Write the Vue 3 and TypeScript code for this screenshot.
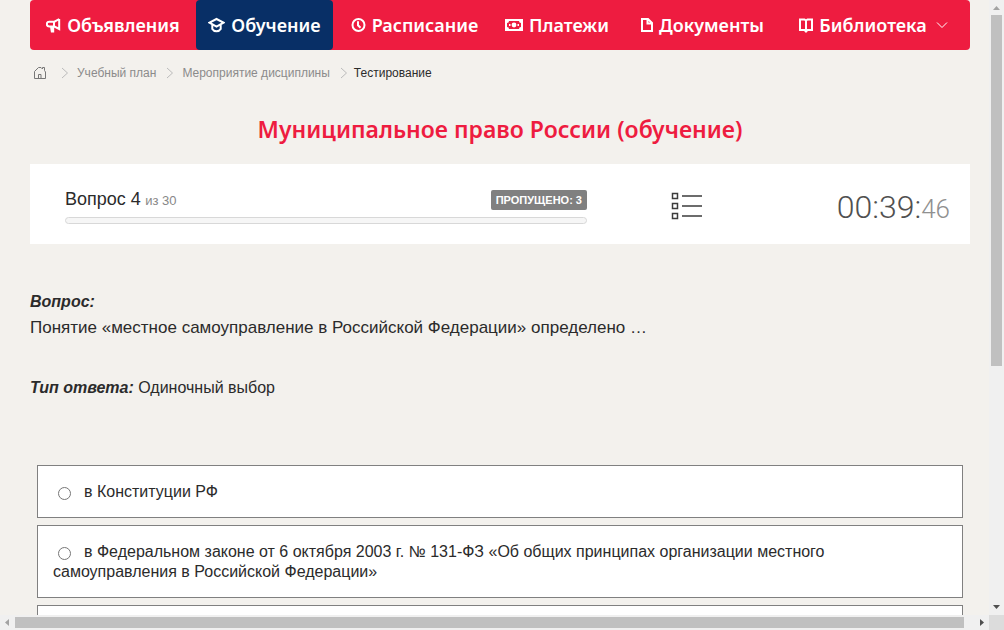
<script setup lang="ts">
import { ref } from 'vue'

interface NavItem {
  label: string
  icon: string
  active?: boolean
  menu?: boolean
}

const navItems: NavItem[] = [
  { label: 'Объявления', icon: 'horn' },
  { label: 'Обучение', icon: 'cap', active: true },
  { label: 'Расписание', icon: 'clock' },
  { label: 'Платежи', icon: 'money' },
  { label: 'Документы', icon: 'file' },
  { label: 'Библиотека', icon: 'book', menu: true },
]

const crumbs: string[] = ['Учебный план', 'Мероприятие дисциплины']

const answers: string[] = [
  'в Конституции РФ',
  'в Федеральном законе от 6 октября 2003 г. № 131-ФЗ «Об общих принципах организации местного самоуправления в Российской Федерации»',
]

const selected = ref<number | null>(null)
</script>

<template>
  <div class="shell">
    <div class="viewport">
      <div class="content">
        <nav class="nav">
          <a v-for="item in navItems" :key="item.label" href="#" class="nav-item" :class="{ active: item.active }">
            <svg v-if="item.icon === 'horn'" width="15" height="16" viewBox="0 0 15 16" class="line">
              <path d="M13.2 2v10L8.5 9.5H3.2a2.4 2.4 0 0 1 0-4.800h5.300L13.200 2M8 5v4.500M5 9.500l.8 5h1.400V10" />
            </svg>
            <svg v-else-if="item.icon === 'cap'" width="17" height="16" viewBox="0 0 17 16" class="line cap">
              <path d="M1.500 5.700 8.500 2l7 3.700-7 3.900zM4.300 7.500v4.500c1 1.700 2.500 2.300 4.200 2.300s3.200-.6 4.200-2.300V7.500" />
            </svg>
            <svg v-else-if="item.icon === 'clock'" width="15" height="16" viewBox="0 0 15 16" class="line">
              <circle cx="7.5" cy="8" r="6" />
              <path d="M7 4.300v4l2.500 2.500" />
            </svg>
            <svg v-else-if="item.icon === 'money'" width="18" height="12" viewBox="0 0 18 12">
              <path fill="#fff" fill-rule="evenodd" d="M0 0h18v12H0zM4 2a2 2 0 0 1-2 2v4a2 2 0 0 1 2 2h10a2 2 0 0 1 2-2V4a2 2 0 0 1-2-2z" />
              <circle cx="9" cy="6" r="2.4" fill="#fff" />
              <path fill="#fff" d="M4 5h1.500v2H4zM12.500 5H14v2h-1.500z" />
            </svg>
            <svg v-else-if="item.icon === 'file'" width="12" height="14" viewBox="0 0 12 14" class="line">
              <path d="M1 1h6l4 4v8H1zM6.500 1v4.500H11" />
            </svg>
            <svg v-else width="14" height="15" viewBox="0 0 14 15" class="line">
              <path d="M1 1.500h4.500L7 2.500l1.500-1H13v10.500H8.500L7 13.500 5.500 12H1zM7 2.500v11" />
            </svg>
            <span>{{ item.label }}</span>
            <svg v-if="item.menu" class="chevron" width="12" height="8" viewBox="0 0 12 8">
              <path d="m1 1.500 5 5 5-5" />
            </svg>
          </a>
        </nav>

        <nav class="crumbs" aria-label="Навигация">
          <a href="#" class="home" aria-label="Главная">
            <svg width="14" height="14" viewBox="0 0 14 14">
              <path d="M1.500 5.500 5.500 1.500h2.500l1.500 1.500V1.500h2v3l1 1.500v6.500h-11zM5.500 12.500v-4h2.500v4" />
            </svg>
          </a>
          <template v-for="crumb in crumbs" :key="crumb">
            <svg class="sep" width="8" height="12" viewBox="0 0 8 12"><path d="m1 1 5.500 5L1 11" /></svg>
            <a href="#">{{ crumb }}</a>
          </template>
          <svg class="sep" width="8" height="12" viewBox="0 0 8 12"><path d="m1 1 5.500 5L1 11" /></svg>
          <span class="current">Тестирование</span>
        </nav>

        <h1>Муниципальное право России (обучение)</h1>

        <section class="status">
          <div class="progress">
            <div class="progress-head">
              <div><span class="number">Вопрос 4</span> <span class="total">из 30</span></div>
              <span class="badge">ПРОПУЩЕНО: 3</span>
            </div>
            <div class="bar"></div>
          </div>
          <button type="button" class="list" aria-label="Список вопросов">
            <svg width="32" height="30" viewBox="0 0 32 30">
              <path d="M1.500 2.500h5v5h-5zM1.500 12.500h5v5h-5zM1.500 22.500h5v5h-5z" />
              <path d="M11 5h20M11 15h20M11 25h20" />
            </svg>
          </button>
          <div class="timer">00:39:<span>46</span></div>
        </section>

        <section class="question">
          <strong>Вопрос:</strong>
          <p class="text">Понятие «местное самоуправление в Российской Федерации» определено …</p>
          <p class="kind"><strong>Тип ответа:</strong> Одиночный выбор</p>
        </section>

        <div class="answers" role="radiogroup">
          <label v-for="(answer, i) in answers" :key="i" class="answer">
            <input v-model="selected" type="radio" name="answer" :value="i" />{{ answer }}
          </label>
          <div class="answer"></div>
        </div>
      </div>
    </div>

    <div class="track vertical">
      <svg width="15" height="15" viewBox="0 0 15 15"><path fill="#a3a3a3" d="M4 10h7L7.500 6z" /></svg>
      <div class="rail"><div class="thumb"></div></div>
      <svg width="15" height="15" viewBox="0 0 15 15"><path fill="#505050" d="M4 5h7L7.500 9z" /></svg>
    </div>
    <div class="track horizontal">
      <svg width="15" height="15" viewBox="0 0 15 15"><path fill="#a3a3a3" d="M9 4v7L5 7.500z" /></svg>
      <div class="rail"><div class="thumb"></div></div>
      <svg width="15" height="15" viewBox="0 0 15 15"><path fill="#505050" d="M6 4v7l4-3.500z" /></svg>
    </div>
    <div class="corner"></div>
  </div>
</template>

<style>
body {
  background: #f3f1ed;
}
</style>

<style scoped>
* {
  box-sizing: border-box;
}
.shell {
  display: grid;
  grid-template: minmax(0, 1fr) 15px / minmax(0, 1fr) 15px;
  height: 100vh;
  color: #2b2b2b;
  font: 16px/20px "Liberation Sans", Arial, sans-serif;
}
.viewport {
  overflow: hidden;
}
.content {
  padding: 0 19px 0 30px;
}
a {
  color: inherit;
  text-decoration: none;
}
.nav {
  display: grid;
  grid-template-columns: 166fr 137fr 163fr 122fr 169fr 183fr;
  height: 50px;
  border-radius: 4px;
  background: #ee1c40;
}
.nav-item {
  display: flex;
  align-items: center;
  justify-content: center;
  gap: 6px;
  border-radius: 4px;
  color: #fff;
  font: 600 18px/24px "Noto Sans", sans-serif;
  white-space: nowrap;
}
.nav-item svg {
  flex: none;
}
.nav-item:last-child {
  padding-right: 10px;
}
.nav-item.active {
  background: #082f66;
}
.line {
  fill: none;
  stroke: #fff;
  stroke-width: 2;
}
.chevron {
  margin-left: 3px;
  fill: none;
  stroke: #fff;
}
.crumbs {
  display: flex;
  align-items: center;
  gap: 8px;
  height: 45px;
  padding-left: 3px;
  color: #8b8b8b;
  font-size: 12px;
}
.crumbs svg {
  display: block;
  fill: none;
  stroke: #777;
}
.home {
  margin-right: 4px;
}
.crumbs .sep {
  margin-left: 2px;
  stroke: #bbb;
}
.crumbs .sep:last-of-type {
  margin-right: -2px;
}
.current {
  color: #2b2b2b;
}
h1 {
  margin: 19px 0;
  color: #ee1c40;
  font: 600 23px/31px "Noto Sans", sans-serif;
  text-align: center;
}
.status {
  display: grid;
  grid-template-columns: 522fr 200fr 163fr;
  align-items: center;
  height: 80px;
  padding: 4px 20px 0 35px;
  background: #fff;
}
.progress-head {
  display: flex;
  align-items: center;
  justify-content: space-between;
  margin-bottom: 6px;
}
.number {
  font-size: 18px;
}
.total {
  color: #888;
  font-size: 13px;
}
.badge {
  padding: 0 5px;
  border-radius: 2px;
  background: #808080;
  color: #fff;
  font-size: 11px;
  font-weight: 700;
}
.bar {
  height: 7px;
  border: 1px solid #d8d8d8;
  border-radius: 4px;
  background: #f6f6f6;
}
.list {
  justify-self: center;
  padding: 0;
  border: 0;
  background: none;
}
.list svg {
  display: block;
  fill: none;
  stroke: #3c3c3c;
  stroke-width: 1.5;
}
.timer {
  justify-self: end;
  padding-top: 4px;
  color: #505050;
  font: 300 32px/40px Roboto, sans-serif;
  white-space: nowrap;
}
.timer span {
  color: #909090;
  font-size: 26px;
}
.question {
  padding-top: 48px;
}
.question strong {
  font-style: italic;
}
.text {
  margin: 6px 0 40px;
  font-size: 17px;
}
.kind {
  margin: 0;
}
.answers {
  display: grid;
  gap: 7px;
  margin: 67px 7px 0;
}
.answer {
  display: block;
  min-height: 53px;
  padding: 16px 30px 15px 15px;
  border: 1px solid #808080;
  background: #fff;
}
.answer input {
  width: 13px;
  height: 13px;
  margin: 0 13px 0 5px;
  vertical-align: -3px;
}
.track {
  display: flex;
  background: #f0f0f0;
}
.track svg {
  flex: none;
}
.vertical {
  flex-direction: column;
}
.rail {
  display: flex;
  flex: 1;
}
.thumb {
  background: #c0c0c0;
}
.vertical .thumb {
  width: 11px;
  height: 60%;
  margin-left: 2px;
}
.horizontal .thumb {
  width: 99%;
  height: 11px;
  margin-top: 2px;
}
.corner {
  background: #dcdcdc;
}
</style>
